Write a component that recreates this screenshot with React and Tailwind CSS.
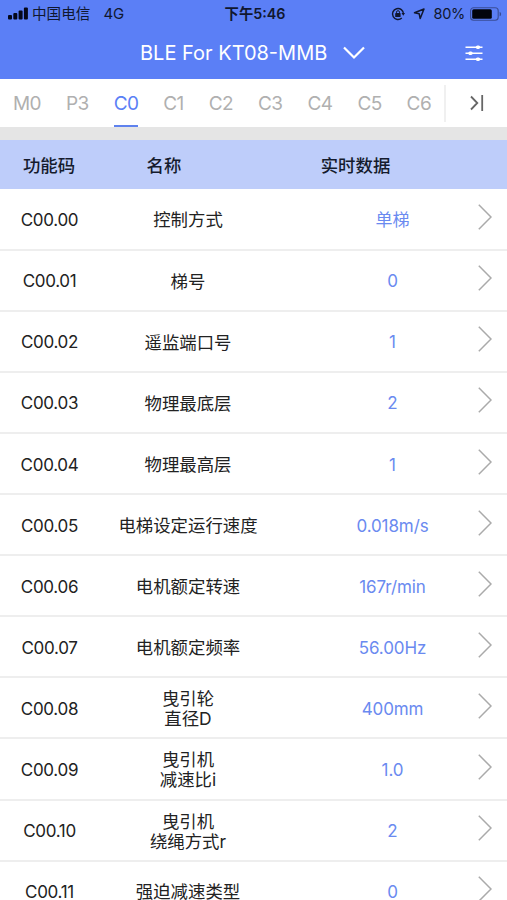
import { useState } from 'react';

const tabs = ['M0', 'P3', 'C0', 'C1', 'C2', 'C3', 'C4', 'C5', 'C6'];

const params = [
  { code: 'C00.00', name: ['控制方式'], value: '单梯' },
  { code: 'C00.01', name: ['梯号'], value: '0' },
  { code: 'C00.02', name: ['遥监端口号'], value: '1' },
  { code: 'C00.03', name: ['物理最底层'], value: '2' },
  { code: 'C00.04', name: ['物理最高层'], value: '1' },
  { code: 'C00.05', name: ['电梯设定运行速度'], value: '0.018m/s' },
  { code: 'C00.06', name: ['电机额定转速'], value: '167r/min' },
  { code: 'C00.07', name: ['电机额定频率'], value: '56.00Hz' },
  { code: 'C00.08', name: ['曳引轮', '直径D'], value: '400mm' },
  { code: 'C00.09', name: ['曳引机', '减速比i'], value: '1.0' },
  { code: 'C00.10', name: ['曳引机', '绕绳方式r'], value: '2' },
  { code: 'C00.11', name: ['强迫减速类型'], value: '0' },
];

function StatusBar() {
  return (
    <div className="flex h-[27px] items-center pl-2 pr-[5px] text-[14px] leading-none text-[#10172f]">
      <div className="flex flex-1 items-center">
        <svg width="20" height="13" viewBox="0 0 20 13" fill="#05081a">
          <rect x="0" y="8" width="4" height="4.5" rx="1" />
          <rect x="5.3" y="6" width="4" height="6.5" rx="1" />
          <rect x="10.6" y="3.5" width="4" height="9" rx="1" />
          <rect x="15.9" y="0.5" width="4" height="12" rx="1" />
        </svg>
        <span className="ml-1 pt-0.5 text-[14.6px]">中国电信</span>
        <span className="ml-[13px] text-[15px]">4G</span>
      </div>
      <span className="pt-px text-[14.3px] font-semibold">下午5:46</span>
      <div className="flex flex-1 items-center justify-end">
        <svg width="14" height="14" viewBox="0 0 14 14" fill="none" stroke="#10172f" strokeWidth="1.4">
          <path d="M10.8 11A5.5 5.5 0 1 1 12.5 7" />
          <path d="M10.5 6h3.5l-1.7 2.8z" fill="#10172f" stroke="none" />
          <rect x="4.2" y="6.1" width="5.4" height="4" rx="0.6" fill="#10172f" stroke="none" />
          <path d="M5.5 6.5V5.2a1.5 1.5 0 0 1 3 0v1.3" strokeWidth="1" />
        </svg>
        <svg className="ml-2" width="12" height="12" viewBox="0 0 12 12" fill="none" stroke="#10172f" strokeWidth="1.5" strokeLinejoin="round">
          <path d="M11 1 7.2 10.5 6.2 5.8 1.5 4.8z" />
        </svg>
        <span className="ml-[9px] pt-0.5 text-[14.5px] tracking-[-0.3px]">80%</span>
        <svg className="ml-[5px]" width="32" height="14" viewBox="0 0 32 14">
          <rect x="0.6" y="0.7" width="27.6" height="12.6" rx="3" fill="none" stroke="#3a4d96" strokeWidth="1.1" />
          <rect x="2.2" y="2.3" width="19.6" height="9.4" rx="1.5" fill="#02040c" />
          <path d="M29.6 4.7c2 .8 2 3.8 0 4.6z" fill="#3a4d96" />
        </svg>
      </div>
    </div>
  );
}

function TitleBar() {
  return (
    <div className="flex h-[52px] items-center pl-[140px] pr-6 text-white">
      <h1 className="whitespace-nowrap text-[20px] leading-none">BLE For KT08-MMB</h1>
      <button className="ml-4">
        <svg width="22" height="14" viewBox="0 0 22 14" fill="none" stroke="white" strokeWidth="2.2">
          <path d="M1 1.5 11 11.5 21 1.5" />
        </svg>
      </button>
      <button className="ml-auto">
        <svg width="18" height="17" viewBox="0 0 18 17" fill="white" stroke="white" strokeWidth="1.4">
          <path d="M0.5 2.2h17M0.5 8.2h17M0.5 14.2h17" />
          <rect x="11.5" y="1.2" width="3" height="2" rx="1" />
          <rect x="4" y="7.2" width="3" height="2" rx="1" />
          <rect x="11.5" y="13.2" width="3" height="2" rx="1" />
        </svg>
      </button>
    </div>
  );
}

export default function App() {
  const [activeTab, setActiveTab] = useState('C0');

  return (
    <div className="flex h-[900px] w-[507px] flex-col overflow-hidden bg-white font-[Inter,'Noto_Sans_CJK_SC',sans-serif]">
      <header className="shrink-0 bg-[#5b7ff6]">
        <StatusBar />
        <TitleBar />
      </header>

      {/* Function group tabs */}
      <nav className="flex h-12 shrink-0">
        <div className="flex w-[444px] gap-[25px] pl-[13px] text-[19px] tracking-[-0.6px]">
          {tabs.map((tab) => (
            <button
              key={tab}
              onClick={() => setActiveTab(tab)}
              className={`h-12 border-b-[2.5px] pt-[3px] leading-none ${activeTab === tab ? 'border-[#5f82ee] text-[#5b7ff6]' : 'border-transparent text-[#b0b0b0]'}`}
            >
              {tab}
            </button>
          ))}
        </div>
        <div className="mt-[6px] h-[37px] w-0.5 bg-[#f0f0f0]" />
        <button className="flex flex-1 items-center justify-center">
          <svg width="14" height="16" viewBox="0 0 14 16" fill="none" stroke="#666" strokeWidth="1.8">
            <path d="M1 1.5 7.3 8 1 14.5M12.2 0v16" />
          </svg>
        </button>
      </nav>

      <div className="h-[13px] shrink-0 bg-[#e5e5e5]" />

      <div className="flex h-[49px] shrink-0 items-center bg-[#becdfa] pt-[3px] text-[17.4px] font-medium text-[#151b2d]">
        <span className="w-[98px] text-center">功能码</span>
        <span className="w-[132px] text-center">名称</span>
        <span className="w-[251px] text-center">实时数据</span>
      </div>

      <ul className="pt-[0.6px]">
        {params.map((p) => (
          <li key={p.code} className="flex h-[61.1px] items-center border-b-2 border-[#eeeeee] text-[17px] leading-none text-[#222]">
            <span className="w-[99px] pt-[3px] text-center tracking-[-0.3px]">{p.code}</span>
            <span className={`w-[178px] text-center text-[17.4px] ${p.name.length > 1 ? 'pt-[3px] leading-[20px]' : 'pt-0.5 leading-none'}`}>
              {p.name.map((line) => (
                <span key={line} className="block">{line}</span>
              ))}
            </span>
            <span className="w-[231px] pt-[3px] text-center tracking-[-0.1px] text-[#6a8af0]">{p.value}</span>
            <svg className="-ml-[30px] mb-[4px] shrink-0" width="14" height="26" viewBox="0 0 14 26" fill="none" stroke="#aaaaaa" strokeWidth="1.5">
              <path d="M0.8 0.8 13 13 0.8 25.2" />
            </svg>
          </li>
        ))}
      </ul>
    </div>
  );
}
